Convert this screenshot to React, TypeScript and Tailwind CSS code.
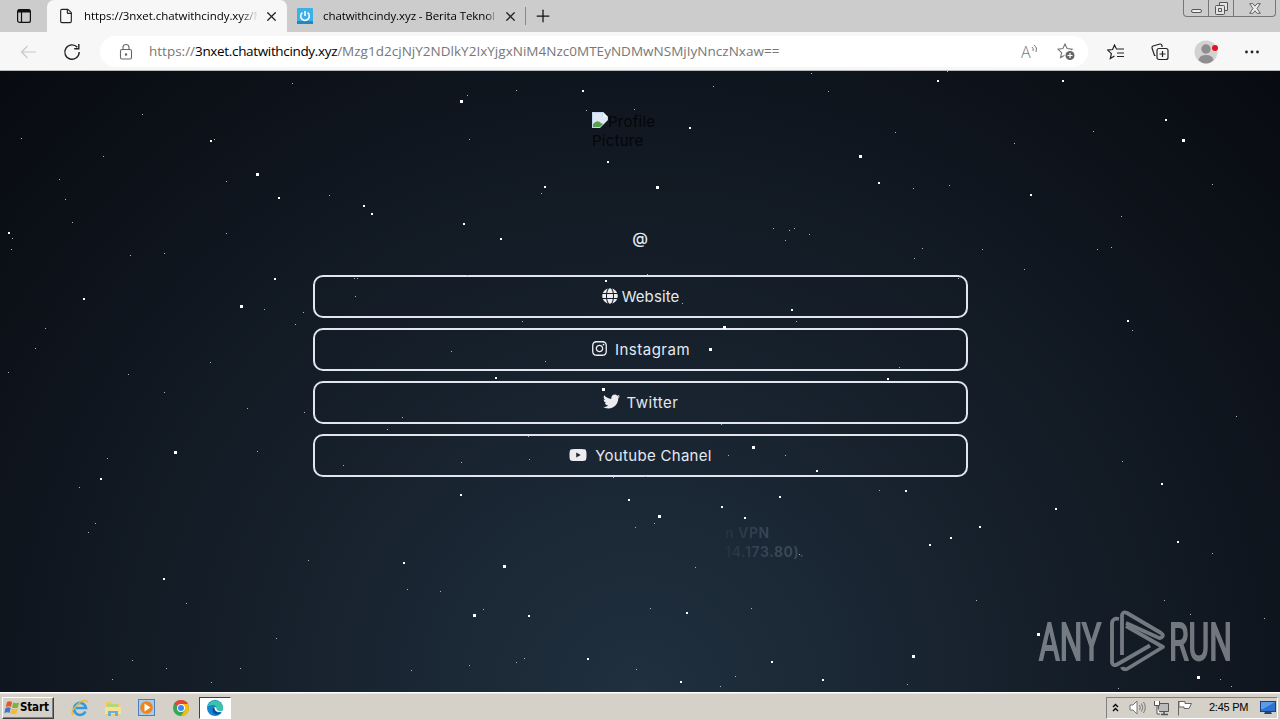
import type { ReactNode } from 'react'
import { File, Plus, X } from 'lucide-react'
import { FaGlobe, FaInstagram, FaTwitter, FaYoutube } from 'react-icons/fa'

const SMALL_STARS = [
  [292, 83], [142, 114], [21, 138], [103, 156], [59, 179], [65, 199], [72, 222], [214, 139], [226, 181],
  [329, 195], [12, 238], [11, 249], [130, 255], [164, 253], [226, 233], [264, 309], [303, 312], [295, 324],
  [355, 296], [354, 278], [357, 278], [45, 328], [35, 348], [8, 372], [128, 374], [210, 362], [947, 71],
  [895, 132], [1093, 131], [1014, 143], [913, 188], [949, 185], [1212, 184], [1121, 216], [922, 248],
  [914, 258], [982, 249], [1097, 249], [1111, 247], [1024, 269], [958, 278], [1132, 330], [899, 367],
  [164, 392], [247, 408], [304, 412], [402, 417], [387, 429], [107, 458], [257, 451], [343, 465], [79, 487],
  [95, 523], [88, 532], [308, 560], [186, 603], [407, 589], [276, 638], [132, 660], [166, 668], [240, 668],
  [411, 670], [112, 679], [211, 682], [469, 139], [516, 90], [467, 95], [586, 110], [634, 109], [713, 86],
  [811, 73], [828, 91], [541, 193], [773, 228], [789, 230], [794, 228], [785, 240], [809, 234], [647, 274],
  [467, 275], [682, 303], [522, 321], [796, 321], [451, 351], [545, 361], [721, 424], [528, 436], [529, 459],
  [461, 462], [728, 455], [785, 455], [613, 477], [645, 476], [654, 523], [635, 527], [695, 567], [799, 554],
  [879, 490], [440, 591], [483, 609], [650, 608], [751, 608], [976, 600], [524, 658], [516, 662], [469, 665],
  [636, 669], [1236, 416], [1122, 461], [1212, 553], [1164, 600], [735, 676], [720, 686], [907, 684],
  [1190, 614], [1264, 618], [1220, 679], [1231, 686], [1118, 688],
]

const MEDIUM_STARS = [
  [210, 140], [278, 197], [363, 205], [371, 213], [8, 232], [274, 278], [83, 298], [937, 80], [1062, 80],
  [1165, 119], [878, 182], [1030, 194], [1127, 320], [887, 378], [100, 478], [403, 562], [163, 578],
  [582, 90], [607, 161], [689, 127], [544, 186], [463, 223], [500, 238], [605, 280], [791, 309], [495, 377],
  [816, 470], [628, 499], [721, 506], [744, 517], [779, 496], [460, 494], [905, 490], [1055, 508],
  [979, 526], [950, 537], [929, 544], [1161, 483], [1177, 541], [686, 612], [528, 615], [587, 658],
  [771, 661], [680, 681], [822, 679],
]

const BIG_STARS = [
  [256, 173], [240, 305], [859, 155], [1182, 139], [174, 451], [460, 100], [656, 186], [709, 348],
  [723, 326], [602, 388], [752, 446], [658, 515], [503, 565], [473, 614], [1037, 633], [912, 655], [1197, 676],
]

function Stars() {
  return (
    <svg viewBox="0 71 1280 621" className="pointer-events-none absolute inset-0 h-full w-full" shapeRendering="crispEdges">
      {SMALL_STARS.map(([x, y]) => (
        <rect key={`${x}-${y}`} x={x} y={y} width={1} height={1} fill="#aeb4bb" />
      ))}
      {MEDIUM_STARS.map(([x, y]) => (
        <rect key={`${x}-${y}`} x={x} y={y} width={2} height={2} fill="#fff" />
      ))}
      {BIG_STARS.map(([x, y]) => (
        <rect key={`${x}-${y}`} x={x} y={y} width={3} height={3} fill="#fff" />
      ))}
    </svg>
  )
}

function WindowControls() {
  return (
    <div className="mr-[4px] ml-auto flex h-[17px] w-[93px] rounded-b-[4px] border border-t-0 border-[#777] text-[#555]">
      <div className="flex w-[25px] items-end justify-center border-r border-[#777] pb-[3px]">
        <div className="h-[4px] w-[11px] rounded-[2px] border border-[#555] bg-[#eee]" />
      </div>
      <div className="flex w-[25px] items-center justify-center border-r border-[#777]">
        <svg width="13" height="13" viewBox="0 0 13 13" fill="#e2e2e2" stroke="currentColor">
          <path d="M4.5.5h8v8h-8z" />
          <rect x=".5" y="3.5" width="9" height="9" rx="1" />
          <path d="M3.500 6.500h3v3h-3z" />
        </svg>
      </div>
      <div className="flex flex-1 items-center justify-center">
        <svg width="12" height="11" viewBox="0 0 12 11" fill="#eee" stroke="currentColor" strokeWidth=".9">
          <path d="M.7.7h3.200L6 3.200 8.100.7h3.200L8 5.500l3.300 4.800H8.100L6 7.800l-2.100 2.500H.7L4 5.500z" />
        </svg>
      </div>
    </div>
  )
}

function TabBar() {
  return (
    <div className="flex h-8 bg-[#cccccc] font-['Open_Sans','Noto_Sans',sans-serif] text-[11.500px] text-black">
      <div className="flex w-[47px] items-center justify-center">
        <svg width="14" height="14" viewBox="0 0 14 14" fill="none" stroke="#111" strokeWidth="1.200">
          <rect x=".6" y=".6" width="12.800" height="12.800" rx="2" />
          <path d="M1 2.500h12M1 1.500h12" strokeWidth="2" />
          <path d="M4.500 3v10" />
        </svg>
      </div>
      <div className="flex w-[240px] items-center rounded-t-[7px] bg-[#f7f7f7] pl-[11px]">
        <File size={16} strokeWidth={1.700} className="text-[#222]" />
        <div className="ml-[10px] w-[174px] overflow-hidden whitespace-nowrap [mask-image:linear-gradient(to_right,black_90%,transparent)]">
          <span className="tracking-[-0.050px]">https://3nxet.chatwithcindy.xyz/M</span>
        </div>
        <X size={15} strokeWidth={2} className="ml-[6px] text-[#222]" />
      </div>
      <div className="flex w-[238px] items-center pl-[10px]">
        <svg width="16" height="16" viewBox="0 0 16 16">
          <rect width="16" height="16" rx="1" fill="#3fb0e6" />
          <path d="M0 13h16v3H0z" fill="#2187c4" />
          <path d="M5.400 4.700a4.300 4.300 0 1 0 5.200 0M8 3v5" fill="none" stroke="#fff" strokeWidth="1.500" />
        </svg>
        <div className="ml-[10px] w-[174px] overflow-hidden whitespace-nowrap [mask-image:linear-gradient(to_right,black_94%,transparent)]">
          <span className="tracking-[-0.090px]">chatwithcindy.xyz - Berita Teknol</span>
        </div>
        <X size={15} strokeWidth={2} className="ml-[6px] text-[#222]" />
      </div>
      <div className="my-[7px] w-px bg-[#888]" />
      <Plus size={20} strokeWidth={1.500} className="mt-[6px] ml-[7px] text-[#111]" />
      <WindowControls />
    </div>
  )
}

const STAR_PATH = 'M8 1l2.100 4.600 5 .6-3.700 3.400 1 5L8 12.100l-4.400 2.500 1-5L.9 6.200l5-.6z'

function AddressBar() {
  return (
    <div className="flex h-[39px] items-center border-b border-[#b9bcbc] bg-[#f7f7f7] pt-[1px]">
      <svg width="18" height="14" viewBox="0 0 18 14" fill="none" stroke="#c8c8c8" strokeWidth="1.200" className="ml-[20px]">
        <path d="M16 7H1.500M7.500 1l-6 6 6 6" />
      </svg>
      <svg width="18" height="18" viewBox="0 0 18 18" fill="none" stroke="#222" strokeWidth="1.400" className="ml-[25px]">
        <path d="M16.200 9A7.200 7.200 0 1 1 14.300 4.200M15.800 1v4.700h-4.600" />
      </svg>
      <div className="ml-[19px] flex h-[31px] w-[988px] items-center rounded-full bg-white pr-[12px] pl-[17px]">
        <svg width="18" height="18" viewBox="0 0 18 18" fill="none" stroke="#666" strokeWidth="1.100">
          <rect x="3.500" y="6.500" width="11" height="9.500" rx="1.500" />
          <path d="M6 6.500V4.500a3 3 0 0 1 6 0v2" />
          <circle cx="9" cy="11.500" r=".7" fill="#666" />
        </svg>
        <div className="ml-[14px] flex-1 font-['Open_Sans','Noto_Sans',sans-serif] text-[13.500px] whitespace-nowrap text-[#777]">
          https://<span className="tracking-[-0.340px] text-black">3nxet.chatwithcindy.xyz</span>
          <span className="tracking-[0.020px]">/Mzg1d2cjNjY2NDlkY2IxYjgxNiM4Nzc0MTEyNDMwNSMjIyNnczNxaw==</span>
        </div>
        <svg width="18" height="18" viewBox="0 0 18 18" fill="none" stroke="#777" strokeWidth="1" className="overflow-visible">
          <text x="0" y="15" fontSize="16" fill="#777" stroke="none" className="font-['Open_Sans',sans-serif] font-light">A</text>
          <path d="M11 4q2 1.500 1 4M13 2q4 2.500 2 7" />
        </svg>
        <svg width="19" height="18" viewBox="0 0 19 18" fill="none" stroke="#777" strokeWidth="1.100" className="ml-[18px]">
          <path d={STAR_PATH} />
          <circle cx="13" cy="12.500" r="5.500" fill="#fff" stroke="none" />
          <circle cx="13" cy="12.500" r="4.500" fill="#666" stroke="none" />
          <path d="M10.500 12.500h5M13 10v5" stroke="#fff" strokeWidth="1.200" />
        </svg>
      </div>
      <svg width="18" height="16" viewBox="0 0 18 16" fill="none" stroke="#222" strokeWidth="1.200" className="ml-[19px]">
        <path d="M9.200 4.500L7.500 1 5.600 5.500l-5 .6 3.800 3.500-1.100 5 4.200-2.500M9 5h8M10 9H17M10 12.500H17" />
      </svg>
      <svg width="18" height="18" viewBox="0 0 18 18" fill="none" stroke="#222" strokeWidth="1.200" className="ml-[26px]">
        <path d="M4.500 12.500H3.500L1 5Q.7 3.500 2 3L9 1Q10.500.8 11 2.500V4" />
        <rect x="6" y="5.500" width="11" height="11" rx="2" />
        <path d="M11.500 8v6M8.500 11h6" />
      </svg>
      <svg width="24" height="24" viewBox="0 0 24 24" className="ml-[25px]">
        <circle cx="12" cy="12" r="11.500" fill="#d2d2d2" />
        <circle cx="12" cy="9" r="4.700" fill="#8e8e8e" />
        <path d="M4.500 20q1-5 7.500-5t7.500 5q-3.500 3.500-7.500 3.500T4.500 20z" fill="#8e8e8e" />
        <circle cx="21" cy="8" r="3" fill="#e81123" />
      </svg>
      <svg width="16" height="4" viewBox="0 0 16 4" fill="#222" className="ml-[26px]">
        <circle cx="2.500" cy="2" r="1.400" />
        <circle cx="8" cy="2" r="1.400" />
        <circle cx="13.500" cy="2" r="1.400" />
      </svg>
    </div>
  )
}

function LinkButton({ icon, className, children }: { icon: ReactNode; className: string; children: ReactNode }) {
  return (
    <a className={`flex h-[43px] w-full items-center justify-center rounded-[10px] border-2 border-[#e0e5ee] pl-px ${className}`}>
      <span className="pb-[2px] text-[#ececf0]">{icon}</span>
      <span className="pt-[2px]">{children}</span>
    </a>
  )
}

function BrokenImage() {
  return (
    <div className="h-[96px] w-[96px] text-[15px] leading-[19px] tracking-[0.250px] text-[#04060a]">
      <svg width="16" height="16" viewBox="0 0 16 16" className="inline-block align-top">
        <path d="M0 0h11l5 5v11H0z" fill="#c6d6ee" />
        <path d="M1 1h9v4h5v5L9 15H1z" fill="#dfe8f5" />
        <path d="M1 15v-3q4-5 8-1l2 1-3 3z" fill="#58a34b" />
        <path d="M11 0v5h5z" fill="#f4f4f4" />
        <path d="M16 8v8H8z" fill="#10161e" />
      </svg>
      Profile Picture
    </div>
  )
}

function Watermark() {
  return (
    <svg width="200" height="64" viewBox="0 0 200 64" className="absolute top-[538px] left-[1038px] opacity-50" fill="#d4d7db">
      <g className="font-['Roboto',sans-serif]" stroke="#d4d7db" strokeWidth="2">
        <text x="1" y="50.500" fontSize="51" textLength="62" lengthAdjust="spacingAndGlyphs">ANY</text>
        <text x="131" y="50.500" fontSize="51" textLength="63" lengthAdjust="spacingAndGlyphs">RUN</text>
      </g>
      <g fill="none" stroke="#d4d7db" strokeWidth="3.800" strokeLinejoin="round">
        <path d="M81 10l-3-.5q-4 1-4 5v39q1 4 5 2l33-19" />
        <path d="M84 46V6q1-4 5-2l34 20q3 2 1 4t-5 0L88 14" />
        <path d="M88 17l37 21-36 22q-4 1-5-2" />
      </g>
    </svg>
  )
}

function ProfilePage() {
  return (
    <main className="relative flex h-[621px] flex-col items-center overflow-hidden bg-[radial-gradient(ellipse_at_bottom,#20303f_0%,#080a10_100%)] pt-[41px] font-['Inter','Noto_Sans',sans-serif] text-[15px] text-[#e4e9f0]">
      <BrokenImage />
      <h1 className="mt-[20px] h-[20px] text-[16px] leading-[20px] font-medium">@</h1>
      <nav className="mt-[27px] flex w-[655px] flex-col gap-[10px]">
        <LinkButton className="gap-[4px] tracking-[0.100px]" icon={<FaGlobe size={16} />}>Website</LinkButton>
        <LinkButton className="gap-[7px] tracking-[0.500px]" icon={<FaInstagram size={17} />}>Instagram</LinkButton>
        <LinkButton className="gap-[7px] tracking-[0.500px]" icon={<FaTwitter size={17} />}>Twitter</LinkButton>
        <LinkButton className="gap-[8px] tracking-[0.300px]" icon={<FaYoutube size={18} />}>Youtube Chanel</LinkButton>
      </nav>
      <footer className="mt-[46px] ml-[248px] w-[78px] bg-[linear-gradient(to_right,#22313e,#3a4857_60%)] bg-clip-text text-[14px] leading-[19px] font-bold tracking-[0.500px] text-transparent">
        <p>n VPN</p>
        <p className="whitespace-nowrap">14.173.80).</p>
      </footer>
      <Stars />
      <Watermark />
    </main>
  )
}

function WindowsFlag() {
  return (
    <svg width="16" height="16" viewBox="0 0 16 16">
      <path d="M3 2q3-1.500 5 0L7 7Q5 5.500 1.800 7z" fill="#e2562b" />
      <path d="M9 2.500q3 1.500 6 0L13.800 7.500q-3 1.200-5.800 0z" fill="#7bb33c" />
      <path d="M1.500 8q3-1.500 5.200 0l-1.200 5Q3.500 11.500.3 13z" fill="#3a78c9" />
      <path d="M7.700 8.500q3 1.500 6 0l-1.200 5q-3 1.200-6 0z" fill="#f4bc2c" />
    </svg>
  )
}

function Taskbar() {
  return (
    <div className="flex h-[28px] items-center border-t border-white bg-[#d5d0c8] pt-[2px] text-black shadow-[inset_0_1px_0_#ebe8e3]">
      <button className="ml-[2px] flex h-[22px] w-[52px] items-center border border-t-white border-r-[#404040] border-b-[#404040] border-l-white pl-[1px] shadow-[inset_-1px_-1px_0_#808080]">
        <WindowsFlag />
        <span className="font-['DejaVu_Sans_Condensed','DejaVu_Sans',sans-serif] text-[11.500px] font-bold tracking-[-0.150px]">Start</span>
      </button>
      <svg width="18" height="18" viewBox="0 0 18 18" fill="none" className="ml-[17px]">
        <path d="M14.500 12.500a6 6 0 1 1 .5-3.500H5" stroke="#2f9be0" strokeWidth="2.600" />
        <path d="M2 16Q-1 13 6 6T17 3" stroke="#efb82e" strokeWidth="1.400" />
      </svg>
      <svg width="18" height="18" viewBox="0 0 18 18" className="ml-[15px]">
        <path d="M2 3h6l1 2h6v11H2z" fill="#edc95f" />
        <path d="M3 5h11v3H3z" fill="#b5d77c" />
        <path d="M1 8h16v7H1z" fill="#f6e19a" />
        <path d="M4 17v-5h10v5h-3v-3H7v3z" fill="#67b0dd" />
      </svg>
      <svg width="17" height="17" viewBox="0 0 17 17" className="ml-[16px]">
        <rect x=".5" y=".5" width="16" height="16" fill="#a8cbea" stroke="#4a7fc0" />
        <circle cx="8.500" cy="8.500" r="6.300" fill="#f08418" />
        <path d="M6.500 4.500l6 4-6 4z" fill="#fff" />
      </svg>
      <svg width="16" height="16" viewBox="0 0 16 16" className="ml-[18px]">
        <circle cx="8" cy="8" r="8" fill="#34a853" />
        <path d="M8 8L1.100 4A8 8 0 0 1 14.900 4z" fill="#ea4335" />
        <path d="M8 4h6.900A8 8 0 0 1 8 16l4-6z" fill="#fbbc05" />
        <circle cx="8" cy="8" r="4" fill="#fff" />
        <circle cx="8" cy="8" r="3" fill="#4285f4" />
      </svg>
      <div className="ml-[10px] flex h-[22px] w-[32px] items-center justify-center border border-t-[#404040] border-r-white border-b-white border-l-[#404040] bg-white">
        <svg width="16" height="16" viewBox="0 0 16 16">
          <circle cx="8" cy="8" r="8" fill="#1485cf" />
          <path d="M.4 6.500A8 8 0 0 1 16 7.500q0 3.500-4 3.500-3 0-2.500-2Q10 5.500 6.500 5T.4 6.500z" fill="#38c7a5" />
          <path d="M6 8q-2 5 3 6.500 3 .5 5-2Q9 13.500 9 9.500 8 7 6 8z" fill="#0b4d96" />
          <path d="M9.500 9q.5-2-2-2Q7 11 11 12h3.500l1.500-2q-2 1.500-4 1-2.500-.3-2.500-2z" fill="#fff" />
        </svg>
      </div>
      <div className="mr-[2px] ml-auto flex h-[22px] w-[172px] items-center border border-t-[#808080] border-r-white border-b-white border-l-[#808080]">
        <svg width="7" height="9" viewBox="0 0 7 9" fill="none" stroke="#000" strokeWidth="1.300" className="ml-[5px]">
          <path d="M1 4l2.500-2.500L6 4M1 8l2.500-2.500L6 8" />
        </svg>
        <svg width="17" height="15" viewBox="0 0 17 15" fill="none" stroke="#777" className="ml-[10px]">
          <path d="M1 5h3l4-4v13l-4-4H1z" fill="#fff" />
          <path d="M10.500 5q1.500 2.500 0 5M12.500 3.500q2.500 4 0 8M14.500 2q3.500 5.500 0 11" />
        </svg>
        <svg width="17" height="16" viewBox="0 0 17 16" fill="none" stroke="#555" className="ml-[7px]">
          <path d="M5.500 3.500h10v8h-10z" fill="#bbb" />
          <path d="M8 14.500h7M11 12v2.500" strokeWidth="1.500" />
          <path d="M1.500 1v4.500h5V1M4 5.500V14h3" fill="#fff" />
        </svg>
        <svg width="17" height="16" viewBox="0 0 17 16" fill="#fff" stroke="#666" className="ml-[6px]">
          <path d="M2.500 15.500V1M3 1.500h6V3.500h6.500L13 8.500H8V7H3z" />
        </svg>
        <span className="ml-[16px] w-[42px] font-['Liberation_Sans',sans-serif] text-[11px] tracking-[-0.250px] whitespace-nowrap">2:45 PM</span>
        <svg width="16" height="14" viewBox="0 0 16 14" className="ml-[9px]">
          <rect x=".5" y=".5" width="15" height="10" fill="#2f73cf" stroke="#1b3f83" />
          <path d="M1 1h14L3 8H1z" fill="#5b9be8" />
          <path d="M4 13h8l-1-2H5z" fill="#29456f" />
        </svg>
      </div>
    </div>
  )
}

export default function App() {
  return (
    <div className="flex h-[720px] w-[1280px] flex-col overflow-hidden">
      <TabBar />
      <AddressBar />
      <ProfilePage />
      <Taskbar />
    </div>
  )
}
